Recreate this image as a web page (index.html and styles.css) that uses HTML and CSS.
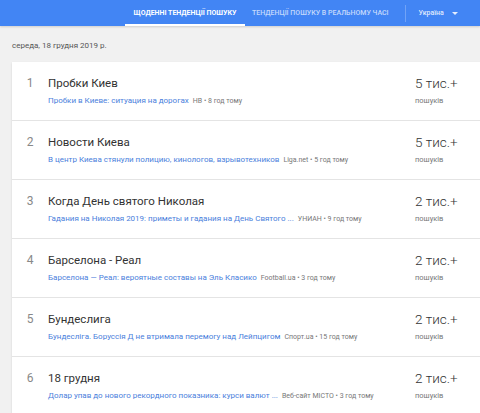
FILE: index.html
```html
<!DOCTYPE html>
<html lang="uk">
<head>
<meta charset="utf-8">
<link rel="stylesheet" href="styles.css">
</head>
<body>
<header class="topbar">
  <nav class="tabs">
    <div class="tab tab-active">ЩОДЕННІ ТЕНДЕНЦІЇ ПОШУКУ</div>
    <div class="tab">ТЕНДЕНЦІЇ ПОШУКУ В РЕАЛЬНОМУ ЧАСІ</div>
  </nav>
  <div class="divider"></div>
  <div class="country">Україна <span class="caret"></span></div>
</header>
<main class="content">
  <div class="date">середа, 18 грудня 2019 р.</div>
  <div class="card">
    <div class="row">
      <div class="num">1</div>
      <div class="info">
        <div class="title">Пробки Киев</div>
        <div class="sub"><span class="link">Пробки в Киеве: ситуация на дорогах</span><span class="src">НВ • 8 год тому</span></div>
      </div>
      <div class="count"><div class="big">5 тис.+</div><div class="small">пошуків</div></div>
    </div>
    <div class="row">
      <div class="num">2</div>
      <div class="info">
        <div class="title">Новости Киева</div>
        <div class="sub"><span class="link">В центр Киева стянули полицию, кинологов, взрывотехников</span><span class="src">Liga.net • 5 год тому</span></div>
      </div>
      <div class="count"><div class="big">5 тис.+</div><div class="small">пошуків</div></div>
    </div>
    <div class="row">
      <div class="num">3</div>
      <div class="info">
        <div class="title">Когда День святого Николая</div>
        <div class="sub"><span class="link">Гадания на Николая 2019: приметы и гадания на День Святого ...</span><span class="src">УНИАН • 9 год тому</span></div>
      </div>
      <div class="count"><div class="big">2 тис.+</div><div class="small">пошуків</div></div>
    </div>
    <div class="row">
      <div class="num">4</div>
      <div class="info">
        <div class="title">Барселона - Реал</div>
        <div class="sub"><span class="link">Барселона — Реал: вероятные составы на Эль Класико</span><span class="src">Football.ua • 3 год тому</span></div>
      </div>
      <div class="count"><div class="big">2 тис.+</div><div class="small">пошуків</div></div>
    </div>
    <div class="row">
      <div class="num">5</div>
      <div class="info">
        <div class="title">Бундеслига</div>
        <div class="sub"><span class="link">Бундесліга. Боруссія Д не втримала перемогу над Лейпцигом</span><span class="src">Спорт.ua • 15 год тому</span></div>
      </div>
      <div class="count"><div class="big">2 тис.+</div><div class="small">пошуків</div></div>
    </div>
    <div class="row">
      <div class="num">6</div>
      <div class="info">
        <div class="title">18 грудня</div>
        <div class="sub"><span class="link">Долар упав до нового рекордного показника: курси валют ...</span><span class="src">Веб-сайт МІСТО • 3 год тому</span></div>
      </div>
      <div class="count"><div class="big">2 тис.+</div><div class="small">пошуків</div></div>
    </div>
  </div>
</main>
</body>
</html>
```

FILE: styles.css
```css
* { box-sizing: border-box; }
html, body { margin: 0; padding: 0; }
body {
  background: #f1f1f1;
  font-family: Roboto, "Liberation Sans", Arial, sans-serif;
  color: #333;
  overflow: hidden;
  width: 480px;
  height: 413px;
}
.topbar {
  height: 26px;
  background: #4285f4;
  display: flex;
  align-items: stretch;
  padding-left: 125px;
  box-shadow: 0 1px 2px rgba(0,0,0,0.15);
}
.tabs { display: flex; }
.tab {
  font-size: 7px;
  font-weight: 500;
  color: rgba(255,255,255,0.7);
  display: flex;
  align-items: center;
  padding: 0 7px;
  white-space: nowrap;
}
.tab-active {
  width: 120px;
  justify-content: center;
  color: #fff;
  font-weight: 700;
  border-bottom: 2px solid #fff;
  padding-top: 2px;
}
.divider {
  width: 1px;
  background: rgba(255,255,255,0.25);
  margin: 5px 0 4px 9px;
}
.country {
  display: flex;
  align-items: center;
  font-size: 7px;
  font-weight: 500;
  color: rgba(255,255,255,0.85);
  padding-left: 13px;
}
.caret {
  display: inline-block;
  width: 0; height: 0;
  border-left: 3px solid transparent;
  border-right: 3px solid transparent;
  border-top: 3px solid rgba(255,255,255,0.85);
  margin-left: 8px;
}
.content { padding: 14px 0 0 12px; }
.date {
  font-size: 8px;
  line-height: 12px;
  color: #555;
  margin-bottom: 10px;
}
.card {
  background: #fff;
  width: 480px;
  box-shadow: 0 1px 2px rgba(0,0,0,0.12);
}
.row {
  display: grid;
  grid-template-columns: 36px 367px 1fr;
  height: 59px;
  border-bottom: 1px solid #e4e4e4;
}
.num {
  text-align: center;
  font-size: 12px;
  line-height: 16px;
  color: #888;
  padding-top: 13px;
}
.info { padding-top: 13px; min-width: 0; }
.title {
  font-size: 11.5px;
  line-height: 16px;
  color: #333;
}
.sub {
  margin-top: 4px;
  font-size: 8px;
  line-height: 12px;
  white-space: nowrap;
}
.link { color: #4a80dc; }
.src { color: #777; font-size: 7px; margin-left: 4px; }
.count { padding-top: 12px; }
.big {
  font-size: 13.5px;
  font-weight: 300;
  line-height: 18px;
  color: #333;
}
.small {
  margin-top: 4px;
  font-size: 7.5px;
  line-height: 10px;
  color: #777;
}
```
